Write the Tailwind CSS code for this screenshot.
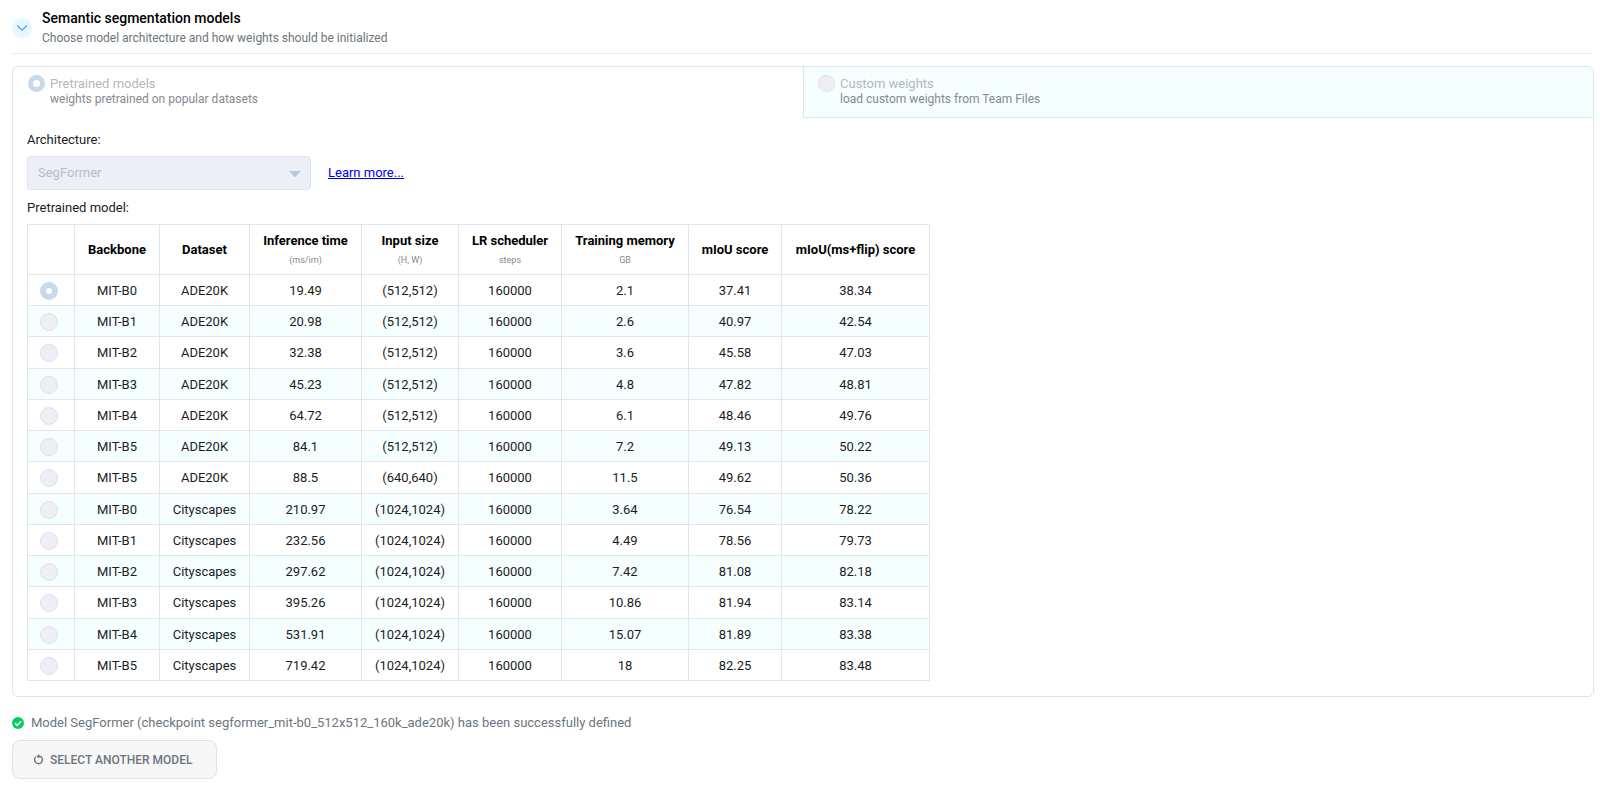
<!DOCTYPE html>
<html lang="en">
<head>
<meta charset="utf-8">
<title>Semantic segmentation models</title>
<script src="https://cdn.jsdelivr.net/npm/@tailwindcss/browser@4"></script>
</head>
<body class="bg-white font-['Roboto',sans-serif] text-[13px] text-[#1a1d24]">
<main class="pl-3 pr-1.5 pt-2">
  <header class="mr-px flex items-center gap-2.5 border-b border-[#e6eef3] pb-[5px]">
    <button type="button" aria-label="Collapse" class="flex size-5 items-center justify-center rounded-full bg-[#e6f7ff]">
      <svg class="size-3" viewBox="0 0 12 12" fill="none" stroke="#409eff" stroke-width="1.1"><path d="M1.200 3.500 6 8.200l4.800-4.700"/></svg>
    </button>
    <div>
      <h1 class="text-sm leading-5 font-medium text-black">Semantic segmentation models</h1>
      <p class="text-xs leading-5 text-[#6c757d]">Choose model architecture and how weights should be initialized</p>
    </div>
  </header>

  <section class="mt-3 rounded-md border border-[#dbe5ef]">
    <div class="grid grid-cols-2">
      <label class="flex h-[51px] items-start gap-[5px] pt-2 pr-3.5 pl-[15px]">
        <input type="radio" name="source" checked disabled class="size-[17px] shrink-0 appearance-none rounded-full border-[5px] border-[#c8d9e9] bg-white">
        <span class="flex flex-col"><span class="leading-[17px] text-[#b4b8bd]">Pretrained models</span><span class="text-xs leading-[14px] text-[#85898f]">weights pretrained on popular datasets</span></span>
      </label>
      <label class="flex h-[51px] items-start gap-[5px] rounded-tr-md border-b border-l border-[#dbe5ef] bg-[#f6ffff] px-3.5 pt-2">
        <input type="radio" name="source" disabled class="size-[17px] shrink-0 appearance-none rounded-full border border-[#dce1ec] bg-[#eeeef6]">
        <span class="flex flex-col"><span class="leading-[17px] text-[#b4b8bd]">Custom weights</span><span class="text-xs leading-[14px] text-[#85898f]">load custom weights from Team Files</span></span>
      </label>
    </div>
    <div class="px-3.5 pt-3 pb-[15px]">
      <label for="architecture" class="block leading-5">Architecture:</label>
      <div class="mt-1.5 flex items-center gap-[17px]">
        <div class="relative w-[284px]">
          <select id="architecture" disabled class="block h-[34px] w-full appearance-none rounded border border-[#dbe5f2] bg-[#edeff7] px-2.5 text-[#b9bcc2] opacity-100"><option>SegFormer</option></select>
          <svg class="pointer-events-none absolute top-[15px] right-2.5 h-1.5 w-3" viewBox="0 0 12 6" fill="#b4c9e0"><path d="M0 0h12L6.700 5.700Q6 6.200 5.300 5.700Z"/></svg>
        </div>
        <a href="#" class="text-[#0000ee] underline">Learn more...</a>
      </div>
      <h2 id="models-title" class="mt-2 leading-5">Pretrained model:</h2>
      <table aria-labelledby="models-title" class="mt-1.5 w-[902px] table-fixed border-collapse border border-[#dfe4ec] text-center [&_td]:border [&_td]:border-[#e1e5ec] [&_td]:pt-px [&_th]:border [&_th]:border-[#e1e5ec] [&_th]:pt-px">
        <colgroup>
          <col class="w-[47px]"><col class="w-[85px]"><col class="w-[90px]"><col class="w-[112px]"><col class="w-[97px]"><col class="w-[103px]"><col class="w-[127px]"><col class="w-[93px]"><col class="w-[148px]">
        </colgroup>
        <thead>
          <tr class="h-[50px] font-bold text-black">
            <th aria-label="Select"></th>
            <th>Backbone</th>
            <th>Dataset</th>
            <th>Inference time<small class="block text-[9px] leading-[18px] font-normal text-[#85898f]">(ms/im)</small></th>
            <th>Input size<small class="block text-[9px] leading-[18px] font-normal text-[#85898f]">(H, W)</small></th>
            <th>LR scheduler<small class="block text-[9px] leading-[18px] font-normal text-[#85898f]">steps</small></th>
            <th>Training memory<small class="block text-[9px] leading-[18px] font-normal text-[#85898f]">GB</small></th>
            <th>mIoU score</th>
            <th>mIoU(ms+flip) score</th>
          </tr>
        </thead>
        <tbody id="models"></tbody>
      </table>
    </div>
  </section>

  <p class="mt-4 flex items-center gap-[7px] leading-5 text-[#6c757d]">
    <svg class="size-3" viewBox="0 0 12 12"><circle cx="6" cy="6" r="6" fill="#00d05e"/><path d="m3 6.200 2.100 2.100L9.200 4.200" fill="none" stroke="#fff" stroke-width="1.600"/></svg>
    <span>Model SegFormer (checkpoint segformer_mit-b0_512x512_160k_ade20k) has been successfully defined</span>
  </p>
  <button type="button" disabled class="mt-[7px] flex h-[39px] min-w-[205px] items-center gap-1.5 rounded-lg border border-[#dbe4f0] bg-[#f7f7f7] px-5 text-xs font-medium text-[#6c757d]">
    <svg class="size-[11px]" viewBox="0 0 12 12" fill="none" stroke="#6c757d" stroke-width="1.500"><path d="M3 3.200A4.300 4.300 0 1 0 9 3.200"/><path d="M6.800 0v5L3.600 2.500Z" fill="#6c757d" stroke="none"/><path d="M6.500 2.500Q8 2.500 9.200 3.400"/></svg>
    SELECT ANOTHER MODEL
  </button>
</main>
<script>
const models = [
  ['MIT-B0','ADE20K','19.49','(512,512)','160000','2.1','37.41','38.34'],
  ['MIT-B1','ADE20K','20.98','(512,512)','160000','2.6','40.97','42.54'],
  ['MIT-B2','ADE20K','32.38','(512,512)','160000','3.6','45.58','47.03'],
  ['MIT-B3','ADE20K','45.23','(512,512)','160000','4.8','47.82','48.81'],
  ['MIT-B4','ADE20K','64.72','(512,512)','160000','6.1','48.46','49.76'],
  ['MIT-B5','ADE20K','84.1','(512,512)','160000','7.2','49.13','50.22'],
  ['MIT-B5','ADE20K','88.5','(640,640)','160000','11.5','49.62','50.36'],
  ['MIT-B0','Cityscapes','210.97','(1024,1024)','160000','3.64','76.54','78.22'],
  ['MIT-B1','Cityscapes','232.56','(1024,1024)','160000','4.49','78.56','79.73'],
  ['MIT-B2','Cityscapes','297.62','(1024,1024)','160000','7.42','81.08','82.18'],
  ['MIT-B3','Cityscapes','395.26','(1024,1024)','160000','10.86','81.94','83.14'],
  ['MIT-B4','Cityscapes','531.91','(1024,1024)','160000','15.07','81.89','83.38'],
  ['MIT-B5','Cityscapes','719.42','(1024,1024)','160000','18','82.25','83.48']
];
document.getElementById('models').innerHTML = models.map((m, i) => `
  <tr class="h-[31px] even:bg-[#f6ffff] nth-[4n+3]:h-8">
    <td><input type="radio" name="model" aria-label="${m[0]} ${m[1]} ${m[3]}" disabled ${i === 0 ? 'checked' : ''} class="ml-3 block size-[18px] appearance-none rounded-full border border-[#dce1ec] bg-[#eeeef6] checked:border-[6px] checked:border-[#c8d9e9] checked:bg-white"></td>
    ${m.map(v => `<td>${v}</td>`).join('')}
  </tr>`).join('');
</script>
</body>
</html>
